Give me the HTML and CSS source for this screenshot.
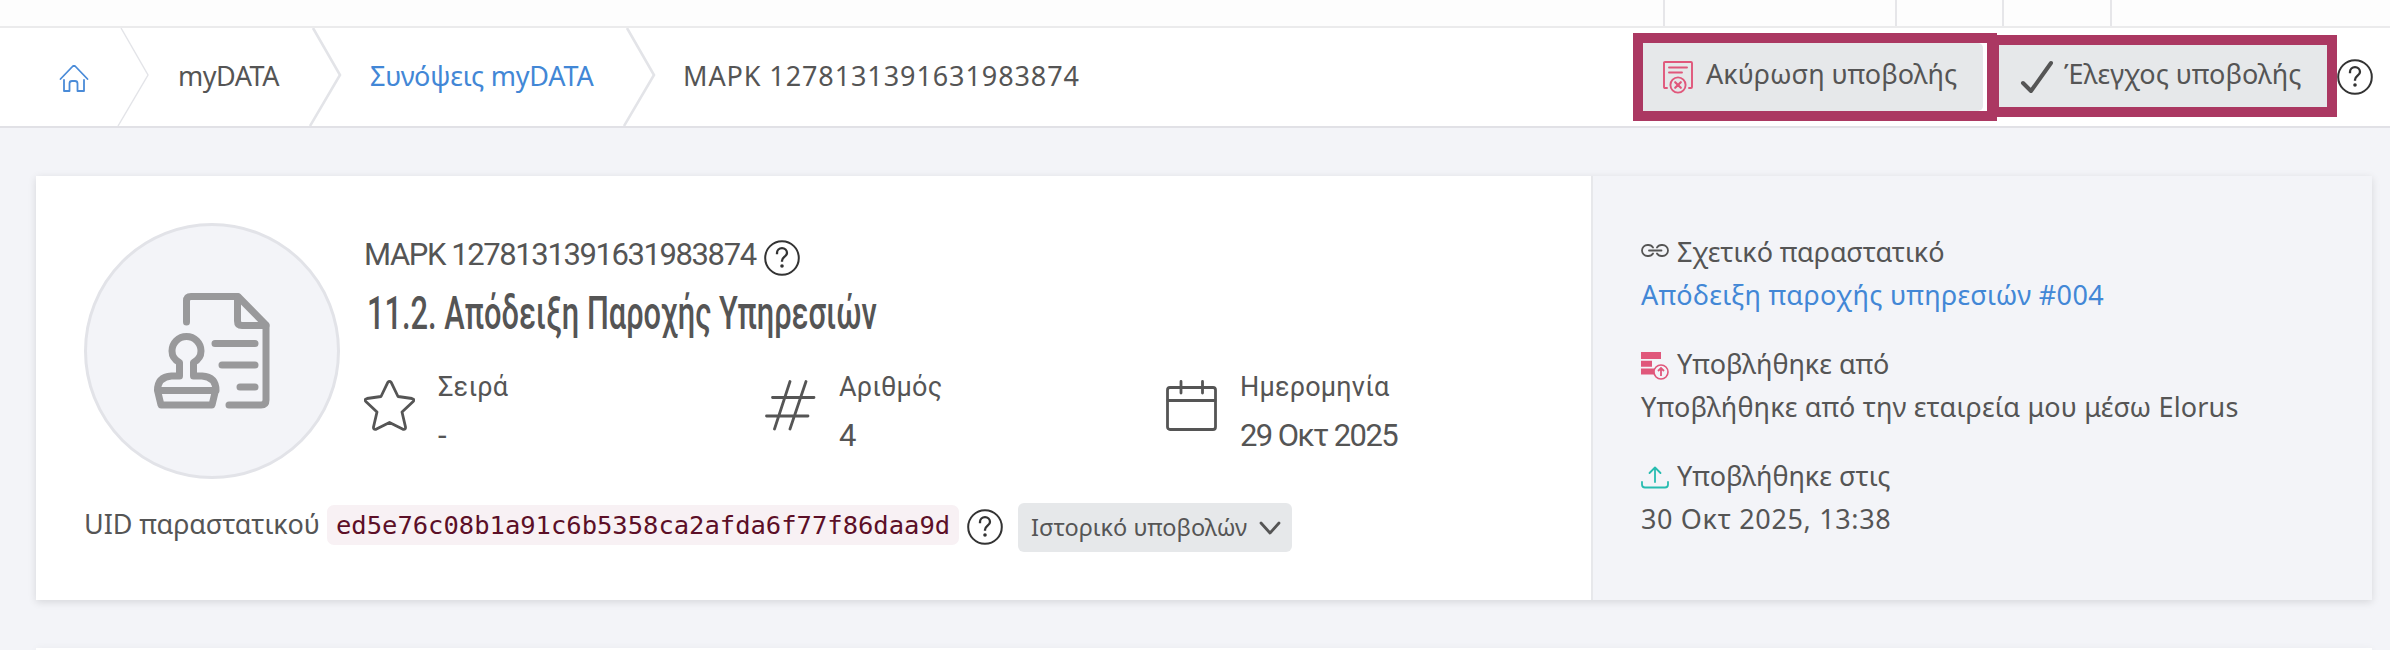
FILE: index.html
```
<!DOCTYPE html>
<html lang="el">
<head>
  <meta charset="UTF-8">
  <title>myDATA - ΜΑΡΚ 1278131391631983874</title>
  <link rel="stylesheet" href="styles.css">
</head>
<body>

  <svg class="defs">
    <symbol id="help" viewBox="0 0 36 36">
      <circle cx="18" cy="18" r="16.8" fill="none" stroke="#333" stroke-width="2"/>
      <path d="M13 14.2V13a5 4.8 0 0 1 10 0c0 3.6-5 3.9-5 7.8v1" fill="none" stroke="#333" stroke-width="2.3"/>
      <circle cx="18" cy="26" r="1.8" fill="#333"/>
    </symbol>
  </svg>

  <div class="topbar">
    <span class="cell cell-1"></span>
    <span class="cell cell-2"></span>
    <span class="cell cell-3"></span>
    <span class="cell cell-4"></span>
  </div>

  <header class="header">
    <nav class="breadcrumb">
      <a class="home" href="#">
        <svg width="30" height="28" viewBox="0 0 30 28" fill="none" stroke="#4a8bd8" stroke-width="1.8" stroke-linecap="round" stroke-linejoin="round">
          <path d="M1.5 15L14 2h2l12.500 13M5 16v11h5.500v-7.500q0-2.500 2.500-2.500h3q2.500 0 2.500 2.500V27H25V16"/>
        </svg>
      </a>
      <svg class="sep" width="34" height="98" viewBox="0 0 34 98"><path d="M4 0L31 47L1 98" stroke-width="1.4"/></svg>
      <span class="crumb crumb-1">myDATA</span>
      <svg class="sep" width="34" height="98" viewBox="0 0 34 98"><path d="M4 0L31 47L1 98" stroke-width="2.6"/></svg>
      <a class="crumb crumb-2" href="#">Συνόψεις myDATA</a>
      <svg class="sep" width="34" height="98" viewBox="0 0 34 98"><path d="M4 0L31 47L1 98" stroke-width="2.6"/></svg>
      <span class="crumb crumb-3">ΜΑΡΚ 1278131391631983874</span>
    </nav>

    <div class="actions">
      <div class="highlight highlight-cancel">
        <button class="btn">
          <svg width="30" height="33" viewBox="0 0 30 33" fill="none" stroke="#e0577b" stroke-width="1.9" stroke-linecap="round">
            <path d="M4 27H2q-1 0-1-1V2q0-1 1-1h26q1 0 1 1v24q0 1-1 1h-2M6 6.500h18M6 11.500h13"/>
            <circle cx="15" cy="24" r="7.600"/>
            <path d="M12.200 21.200l5.600 5.600M17.800 21.200l-5.600 5.600" stroke-width="2.200"/>
          </svg>
          <span class="btn-text-1">Ακύρωση υποβολής</span>
        </button>
      </div>
      <div class="highlight highlight-check">
        <button class="btn">
          <svg width="34" height="34" viewBox="0 0 34 34" fill="none" stroke="#555" stroke-width="4" stroke-linecap="round" stroke-linejoin="round">
            <path d="M3 23l8 8L31 3"/>
          </svg>
          <span class="btn-text-2">Έλεγχος υποβολής</span>
        </button>
      </div>
      <svg class="help"><use href="#help"/></svg>
    </div>
  </header>

  <main>
    <section class="card">
      <div class="card-main">
        <div class="profile">
          <div class="avatar">
            <svg width="118" height="118" viewBox="0 0 118 118" fill="none" stroke="#99999b" stroke-width="7" stroke-linecap="round" stroke-linejoin="round">
              <path d="M33.500 30V9q0-4.500 4.500-4.500h47L113 33v75q0 5-5 5H76"/>
              <path d="M84.500 5v24q0 4.500 4.500 4.500h24M62 51.500h40M69 73h33M87 95h15"/>
              <path d="M26.500 84V70.500q-7.500-4-7.500-11.500a14.500 14.500 0 0 1 29 0q0 7.500-7.500 11.500V84H49q14 1 14 14.500H4.500q0-13.500 14-14.500h8M4.500 98.500L8 113h51l3.500-14.500"/>
            </svg>
          </div>
          <div class="info">
            <div class="mark">
              <span class="mark-text">ΜΑΡΚ 1278131391631983874</span>
              <svg class="help"><use href="#help"/></svg>
            </div>
            <h1><span>11.2. Απόδειξη Παροχής Υπηρεσιών</span></h1>
            <div class="facts">
              <div class="fact">
                <svg width="51" height="51" viewBox="0 0 51 51" fill="none" stroke="#555" stroke-width="2.800" stroke-linejoin="round">
                  <path d="M23.800 2.400q1.700-2 3.400 0L34 16.500l14 2q3 .7 1.200 3L38 32l3.500 15q.2 3-2.500 2.300L25.500 42.500 12 49.300q-2.700.7-2.500-2.300L13 32 1.800 21.500q-1.800-2.300 1.200-3l14-2z"/>
                </svg>
                <dl><dt>Σειρά</dt><dd>-</dd></dl>
              </div>
              <div class="fact">
                <svg width="51" height="51" viewBox="0 0 51 51" fill="none" stroke="#555" stroke-width="2.800" stroke-linecap="round">
                  <path d="M25 1.500L9.500 49M41 1.500L25 49M7.500 17.500h41.500M1.500 36h41.500"/>
                </svg>
                <dl><dt>Αριθμός</dt><dd>4</dd></dl>
              </div>
              <div class="fact">
                <svg width="51" height="51" viewBox="0 0 51 51" fill="none" stroke="#555" stroke-width="2.800" stroke-linecap="round">
                  <rect x="1.500" y="7.500" width="48" height="42" rx="2.500"/>
                  <path d="M2 20.500h47M15 1.500v11.500M36.500 1.500v11.500"/>
                </svg>
                <dl><dt>Ημερομηνία</dt><dd>29 Οκτ 2025</dd></dl>
              </div>
            </div>
          </div>
        </div>
        <div class="uid">
          <span class="uid-label">UID παραστατικού</span>
          <code>ed5e76c08b1a91c6b5358ca2afda6f77f86daa9d</code>
          <svg class="help"><use href="#help"/></svg>
          <button class="history">
            <span>Ιστορικό υποβολών</span>
            <svg width="22" height="14" viewBox="0 0 22 14" fill="none" stroke="#555" stroke-width="2.800" stroke-linecap="round" stroke-linejoin="round"><path d="M2 2l9 10 9-10"/></svg>
          </button>
        </div>
      </div>

      <aside class="card-side">
        <div class="item">
          <div class="item-title">
            <svg width="28" height="28" viewBox="0 0 28 28" fill="none" stroke="#555" stroke-width="1.800" stroke-linecap="round">
              <path d="M12 9.500q-1.500-2.500-4.500-2.500H6.500a5.500 5.500 0 0 0 0 11h1q3 0 4.500-2.500M16 9.500q1.500-2.500 4.500-2.500h1a5.500 5.500 0 0 1 0 11h-1q-3 0-4.500-2.500M8 12.500h12.500"/>
            </svg>
            <span class="t-related">Σχετικό παραστατικό</span>
          </div>
          <a class="t-link" href="#">Απόδειξη παροχής υπηρεσιών #004</a>
        </div>
        <div class="item">
          <div class="item-title item-title-low">
            <svg width="28" height="28" viewBox="0 0 28 28" fill="#e0577b">
              <path d="M0 0h20v7H0zM0 8.700h11v6H0zM0 16.500h14v6H0z"/>
              <circle cx="20" cy="20" r="7" fill="#f3f4f9" stroke="#e0577b" stroke-width="1.600"/>
              <path d="M20 24v-7.500M17 19l3-3 3 3" fill="none" stroke="#e0577b" stroke-width="1.800"/>
            </svg>
            <span>Υποβλήθηκε από</span>
          </div>
          <div class="t-source">Υποβλήθηκε από την εταιρεία μου μέσω Elorus</div>
        </div>
        <div class="item">
          <div class="item-title item-title-low">
            <svg width="28" height="28" viewBox="0 0 28 28" fill="none" stroke="#27bcb0" stroke-width="1.800" stroke-linecap="round" stroke-linejoin="round">
              <path d="M1 18v2.500q0 3 3 3h20q3 0 3-3V18M14 18V3.500M8.500 9L14 3.500 19.500 9"/>
            </svg>
            <span>Υποβλήθηκε στις</span>
          </div>
          <div class="t-date">30 Οκτ 2025, 13:38</div>
        </div>
      </aside>
    </section>

    <section class="card card-next"></section>
  </main>

</body>
</html>
```
FILE: styles.css
```
* { box-sizing: border-box; }
body { margin: 0; background: #f3f4f8; color: #555; font: 27px "Noto Sans", sans-serif; }
a { color: #4287d6; text-decoration: none; }
button { border: 0; font: inherit; color: inherit; background: #e6e8ea; }
svg { flex: none; display: block; }
.defs { position: absolute; width: 0; height: 0; }
.help { width: 36px; height: 36px; }

.topbar { height: 28px; display: flex; justify-content: flex-end; background: #fdfdfd; border-bottom: 2px solid #ebebec; }
.cell { border-left: 2px solid #e6e6e9; }
.cell-1 { width: 232px; }
.cell-2 { width: 107px; }
.cell-3 { width: 108px; }
.cell-4 { width: 280px; }

.header { height: 100px; display: flex; justify-content: space-between; background: #fff; border-bottom: 2px solid #e1e1e6; }
.breadcrumb { display: flex; align-items: center; }
.home { width: 117px; padding: 1px 0 0 59px; }
.sep { fill: none; stroke: #e3e4e8; }
.crumb { height: 43px; line-height: 43px; margin-top: -3px; white-space: nowrap; }
.crumb-1 { width: 158px; padding-left: 27px; letter-spacing: -.5px; }
.crumb-2 { width: 280px; padding-left: 27px; letter-spacing: -.2px; }
.crumb-3 { padding-left: 26px; letter-spacing: .9px; }

.actions { display: flex; align-items: flex-start; padding: 5px 17px 0 0; }
.highlight { border: 10px solid #ab3862; background: #fff; }
.highlight-cancel { width: 364px; height: 88px; }
.highlight-check { width: 348px; height: 82px; margin: 2px 0 0 -8px; }
.btn { display: flex; align-items: center; height: 100%; padding: 0; white-space: nowrap; }
.btn span { line-height: 43px; }
.highlight-cancel .btn { width: 340px; padding-left: 20px; gap: 13px; border-radius: 0 5px 5px 0; }
.highlight-check .btn { width: 100%; padding-left: 21px; gap: 10px; }
.btn svg { margin-top: 1px; }
.highlight-cancel .btn span { margin-top: -8px; }
.highlight-check .btn span { margin-top: -6px; }
.actions .help { margin-top: 26px; }

main { padding: 48px 18px 0 36px; }
.card { display: flex; height: 424px; background: #fff; box-shadow: 0 2px 8px rgba(0, 0, 0, .12); }
.card-next { height: 2px; margin-top: 48px; }
.card-main { width: 1555px; padding: 47px 48px 0; }
.card-side { flex: 1; padding: 54px 48px 0; background: #f3f4f8; border-left: 2px solid #e7e8eb; }

.profile { display: flex; gap: 24px; height: 257px; }
.avatar { width: 256px; height: 256px; flex: none; display: flex; align-items: center; justify-content: center; border: 3px solid #e2e3e8; border-radius: 50%; background: #f3f4f8; }
.info { flex: 1; font-family: Roboto, sans-serif; }
.mark { display: flex; align-items: center; gap: 8px; height: 69px; }
.mark-text { width: 392px; font-size: 31px; letter-spacing: -1.4px; white-space: nowrap; margin-top: -7px; }
h1 { margin: -9px 0 0 3px; height: 60px; line-height: 60px; font-size: 46px; font-weight: 500; white-space: nowrap; }
h1 span { display: inline-block; transform: scaleX(.67); transform-origin: 0 50%; }
.facts { display: grid; grid-template-columns: repeat(3, 401px); margin-top: 22px; }
.fact { display: flex; gap: 23px; }
.fact svg { margin-top: 15px; }
dl, dd { margin: 0; }
dt { line-height: 43px; padding-top: 1px; letter-spacing: .2px; }
dd { font-size: 31px; line-height: 54px; letter-spacing: -1.6px; }

.uid { display: flex; align-items: flex-start; height: 49px; margin-top: 23px; }
.uid-label { width: 243px; line-height: 41px; letter-spacing: -.1px; white-space: nowrap; }
code { width: 632px; height: 40px; margin: 2px 8px 0 0; padding: 0 9px; border-radius: 7px; background: #f8f1f4; color: #5c0f27; font: 25.5px/40px "DejaVu Sans Mono", monospace; }
.uid .help { margin-top: 6px; }
.history { display: flex; align-items: center; gap: 12px; width: 274px; height: 49px; margin-left: 15px; padding: 0 0 0 13px; border-radius: 6px; font-size: 23.5px; white-space: nowrap; }
.history span { margin-top: -2px; }

.item { margin-bottom: 26px; line-height: 43px; white-space: nowrap; }
.item-title { display: flex; align-items: center; gap: 8px; }
.item-title-low svg { margin-top: 4px; }
.item a { display: block; }
.t-related { letter-spacing: -.1px; }
.t-link { letter-spacing: .33px; }
.t-source { letter-spacing: .16px; }
.t-date { letter-spacing: .65px; }
```
